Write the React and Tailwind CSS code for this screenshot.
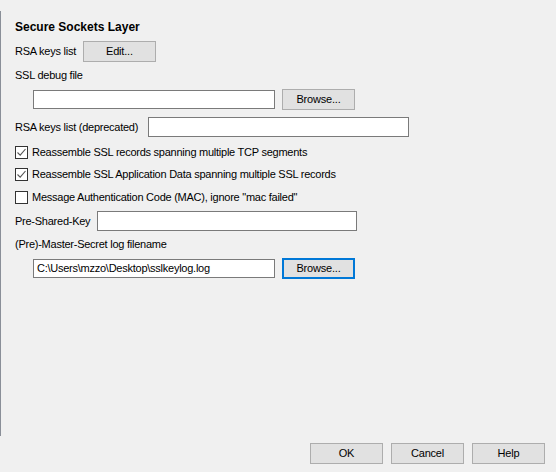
const font = { fontFamily: '"Liberation Sans", Arial, sans-serif' }

function Btn({ children, focused, className = '' }) {
  return (
    <button
      className={`h-[21px] w-[73px] shrink-0 bg-[#e1e1e1] text-[11px] tracking-[-0.2px] text-black ${
        focused ? 'border-2 border-[#0078d7]' : 'border border-[#adadad]'
      } ${className}`}
    >
      {children}
    </button>
  )
}

function Input({ className = '', value = '' }) {
  return (
    <div className={`flex h-[19px] items-center border border-[#7a7a7a] bg-white px-[3px] text-[11px] text-black ${className}`}>
      {value}
    </div>
  )
}

function Check({ checked, label, className = '' }) {
  return (
    <div className={`flex h-[16px] items-center ${className}`}>
      <span className="flex h-[13px] w-[13px] items-center justify-center border border-[#333] bg-white">
        {checked && (
          <svg width="11" height="11" viewBox="0 0 11 11">
            <path d="M1.5 5.5 L4.2 8.2 L9.5 2" fill="none" stroke="#555" strokeWidth="1.1" />
          </svg>
        )}
      </span>
      <span className="ml-[4px]">{label}</span>
    </div>
  )
}

export default function App() {
  return (
    <div className="flex h-[472px] w-[556px] flex-col bg-[#f0f0f0] text-[11px] tracking-[-0.25px] text-black" style={font}>
      {/* Protocol preferences panel */}
      <div className="mt-[11px] flex h-[425px] flex-col border-l border-[#8a8f98] pl-[14px]">
        <div className="mt-[8px] flex h-[16px] items-center text-[12px] font-bold tracking-normal">Secure Sockets Layer</div>

        <div className="mt-[6px] flex h-[21px] items-center">
          <span>RSA keys list</span>
          <Btn className="ml-[7px]">Edit...</Btn>
        </div>

        <div className="mt-[5px] flex h-[16px] items-center">SSL debug file</div>

        <div className="mt-[6px] flex h-[21px] items-center pl-[18px]">
          <Input className="w-[242px]" />
          <Btn className="ml-[7px]">Browse...</Btn>
        </div>

        <div className="mt-[7px] flex h-[20px] items-center">
          <span>RSA keys list (deprecated)</span>
          <Input className="ml-[10px] h-[20px] w-[261px]" />
        </div>

        <Check className="mt-[7px]" checked label="Reassemble SSL records spanning multiple TCP segments" />
        <Check className="mt-[6px]" checked label="Reassemble SSL Application Data spanning multiple SSL records" />
        <Check className="mt-[7px]" label={'Message Authentication Code (MAC), ignore "mac failed"'} />

        <div className="mt-[6px] flex h-[20px] items-center">
          <span>Pre-Shared-Key</span>
          <Input className="ml-[7px] h-[20px] w-[260px]" />
        </div>

        <div className="mt-[5px] flex h-[16px] items-center">(Pre)-Master-Secret log filename</div>

        <div className="mt-[6px] flex h-[21px] items-center pl-[18px]">
          <Input className="w-[242px]" value="C:\Users\mzzo\Desktop\sslkeylog.log" />
          <Btn focused className="ml-[7px]">Browse...</Btn>
        </div>
      </div>

      {/* Dialog buttons */}
      <div className="mt-[7px] flex justify-end gap-[8px] pr-[11px]">
        <Btn>OK</Btn>
        <Btn>Cancel</Btn>
        <Btn>Help</Btn>
      </div>
    </div>
  )
}
